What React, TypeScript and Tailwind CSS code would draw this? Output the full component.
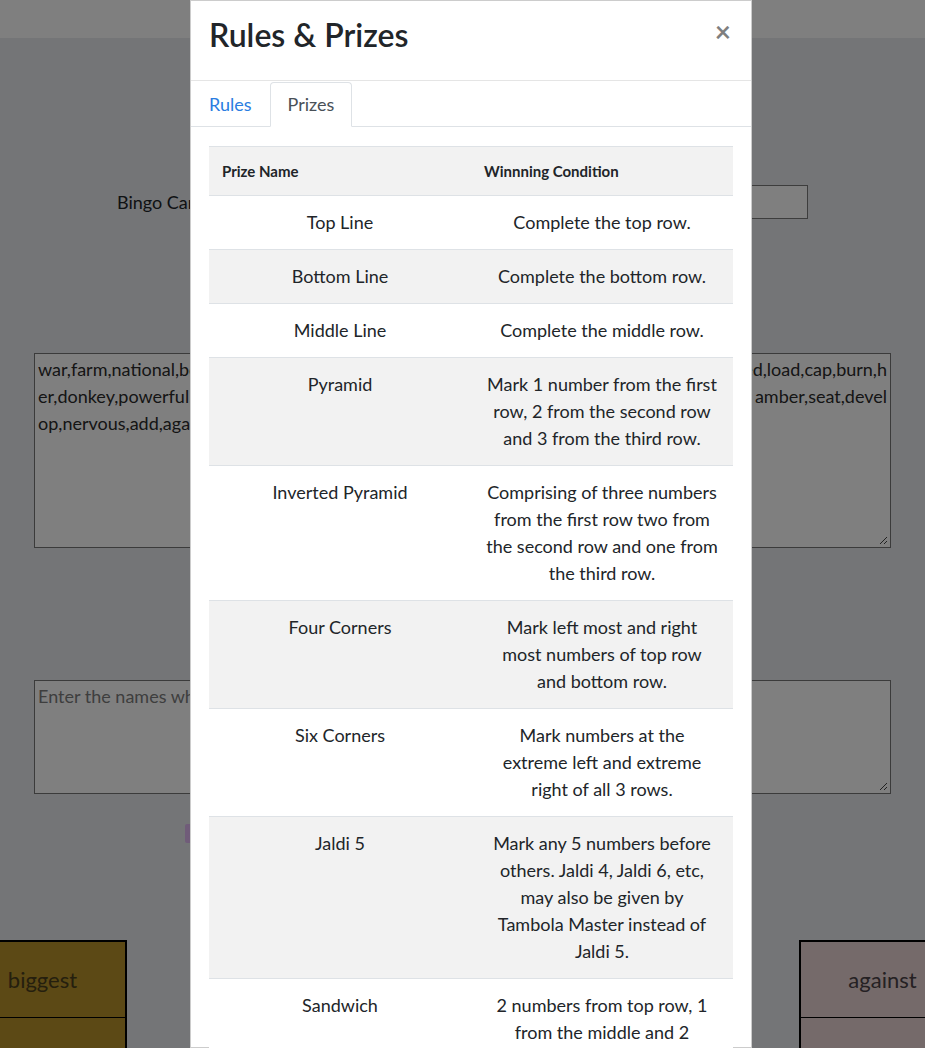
import React from 'react';

const prizes: { name: string; lines: string[] }[] = [
  { name: 'Top Line', lines: ['Complete the top row.'] },
  { name: 'Bottom Line', lines: ['Complete the bottom row.'] },
  { name: 'Middle Line', lines: ['Complete the middle row.'] },
  {
    name: 'Pyramid',
    lines: ['Mark 1 number from the first', 'row, 2 from the second row', 'and 3 from the third row.'],
  },
  {
    name: 'Inverted Pyramid',
    lines: [
      'Comprising of three numbers',
      'from the first row two from',
      'the second row and one from',
      'the third row.',
    ],
  },
  {
    name: 'Four Corners',
    lines: ['Mark left most and right', 'most numbers of top row', 'and bottom row.'],
  },
  {
    name: 'Six Corners',
    lines: ['Mark numbers at the', 'extreme left and extreme', 'right of all 3 rows.'],
  },
  {
    name: 'Jaldi 5',
    lines: [
      'Mark any 5 numbers before',
      'others. Jaldi 4, Jaldi 6, etc,',
      'may also be given by',
      'Tambola Master instead of',
      'Jaldi 5.',
    ],
  },
  {
    name: 'Sandwich',
    lines: ['2 numbers from top row, 1', 'from the middle and 2', 'from the bottom row.'],
  },
];

const ResizeGrip: React.FC = () => (
  <svg className="absolute right-[2px] bottom-[2px]" width="10" height="10" viewBox="0 0 10 10">
    <line x1="9" y1="2" x2="2" y2="9" stroke="#444" strokeWidth="1" />
    <line x1="9" y1="6" x2="6" y2="9" stroke="#444" strokeWidth="1" />
  </svg>
);

const BackgroundPage: React.FC = () => {
  return (
    <div className="flex flex-col">
      <div className="h-[38px] bg-white" />

      <div className="mt-[147px] flex items-center px-[117px]">
        <label className="w-[200px] shrink-0 text-[18px] leading-[27px] text-[#212529]">Bingo Card Title</label>
        <div className="h-[34px] flex-1 border border-[#7a7a7a] bg-white" />
      </div>

      <div className="relative mx-[34px] mt-[134px] h-[195px] overflow-hidden border border-[#767676] bg-white px-[3px] py-[2px] text-[18px] leading-[27px] text-[#2b2b2b]">
        <div className="flex justify-between whitespace-nowrap">
          <span className="min-w-0 overflow-hidden">war,farm,national,bottle,shadow,forest,market,sudden,happy,kind,wood</span>
          <span className="shrink-0">shed,load,cap,burn,h</span>
        </div>
        <div className="flex justify-between whitespace-nowrap">
          <span className="min-w-0 overflow-hidden">er,donkey,powerful,rich,ground,stone,pencil,river,chamber,seat</span>
          <span className="shrink-0">amber,seat,devel</span>
        </div>
        <div className="whitespace-nowrap">op,nervous,add,against,biggest,thin,cloud,quick</div>
        <ResizeGrip />
      </div>

      <div className="relative mx-[34px] mt-[132px] h-[114px] border border-[#767676] bg-white px-[3px] py-[2px] text-[18px] leading-[27px] text-[#7c7c7c]">
        Enter the names which should appear on the cards
        <ResizeGrip />
      </div>

      <div className="mt-[30px] flex">
        <div className="ml-[185px] h-[19px] w-[120px] rounded-[2px] bg-[#e0b8f2]" />
      </div>

      <div className="mt-[97px] flex justify-center">
        <div className="flex w-[1008px] shrink-0 justify-between">
          <div className="flex w-[168px] flex-col border-2 border-black bg-[#b8922a] text-[22px] text-[#4a3e1c]">
            <div className="flex h-[76px] items-center justify-center border-b border-black">biggest</div>
            <div className="h-[60px]" />
          </div>
          <div className="flex w-[168px] flex-col border-2 border-black bg-[#ead4d4] text-[22px] text-[#4a4246]">
            <div className="flex h-[76px] items-center justify-center border-b border-black">against</div>
            <div className="h-[60px]" />
          </div>
        </div>
      </div>
    </div>
  );
};

const RulesModal: React.FC = () => {
  return (
    <div className="w-[562px] border border-black/20 bg-white text-[#212529]">
      <div className="flex h-[80px] items-start justify-between border-b border-[#e5e5e5] pt-[15px] pr-[20px] pl-[18px]">
        <h3 className="text-[32px] leading-[38px] font-semibold text-[#212529]">Rules &amp; Prizes</h3>
        <button className="text-[28px] leading-[30px] font-bold text-black/50">×</button>
      </div>

      <div className="flex border-b border-[#dee2e6] pt-px text-[18px] leading-[27px]">
        <a className="-mb-px border border-transparent px-[17px] py-[8px] text-[#2a7de1]">Rules</a>
        <a className="-mb-px rounded-t-[4px] border border-[#dee2e6] border-b-white bg-white px-[17px] py-[8px] text-[#495057]">
          Prizes
        </a>
      </div>

      <div className="px-[18px] pt-[19px]">
        <table className="w-full table-fixed border-collapse">
          <thead>
            <tr className="bg-[#f2f2f2]">
              <th className="w-1/2 border-t border-b border-[#dee2e6] px-[13px] py-[12px] text-left text-[15px] leading-[24px] font-bold">
                Prize Name
              </th>
              <th className="w-1/2 border-t border-b border-[#dee2e6] px-[13px] py-[12px] text-left text-[15px] leading-[24px] font-bold">
                Winnning Condition
              </th>
            </tr>
          </thead>
          <tbody>
            {prizes.map((p, i) => (
              <tr key={p.name} className={i % 2 === 1 ? 'bg-[#f2f2f2]' : 'bg-white'}>
                <td className="border-b border-[#dee2e6] px-[13px] py-[13px] text-center align-top text-[18px] leading-[27px]">
                  {p.name}
                </td>
                <td className="border-b border-[#dee2e6] px-[13px] py-[13px] text-center align-top text-[18px] leading-[27px] whitespace-nowrap">
                  {p.lines.map((l, j) => (
                    <div key={j}>{l}</div>
                  ))}
                </td>
              </tr>
            ))}
          </tbody>
        </table>
      </div>
    </div>
  );
};

export default function App() {
  return (
    <div className="relative h-[1048px] overflow-hidden bg-[#e8eaee] font-['Lato',sans-serif]">
      <BackgroundPage />
      <div className="absolute inset-0 bg-black/50" />
      <div className="absolute inset-0 flex justify-center pl-[17px]">
        <RulesModal />
      </div>
    </div>
  );
}
